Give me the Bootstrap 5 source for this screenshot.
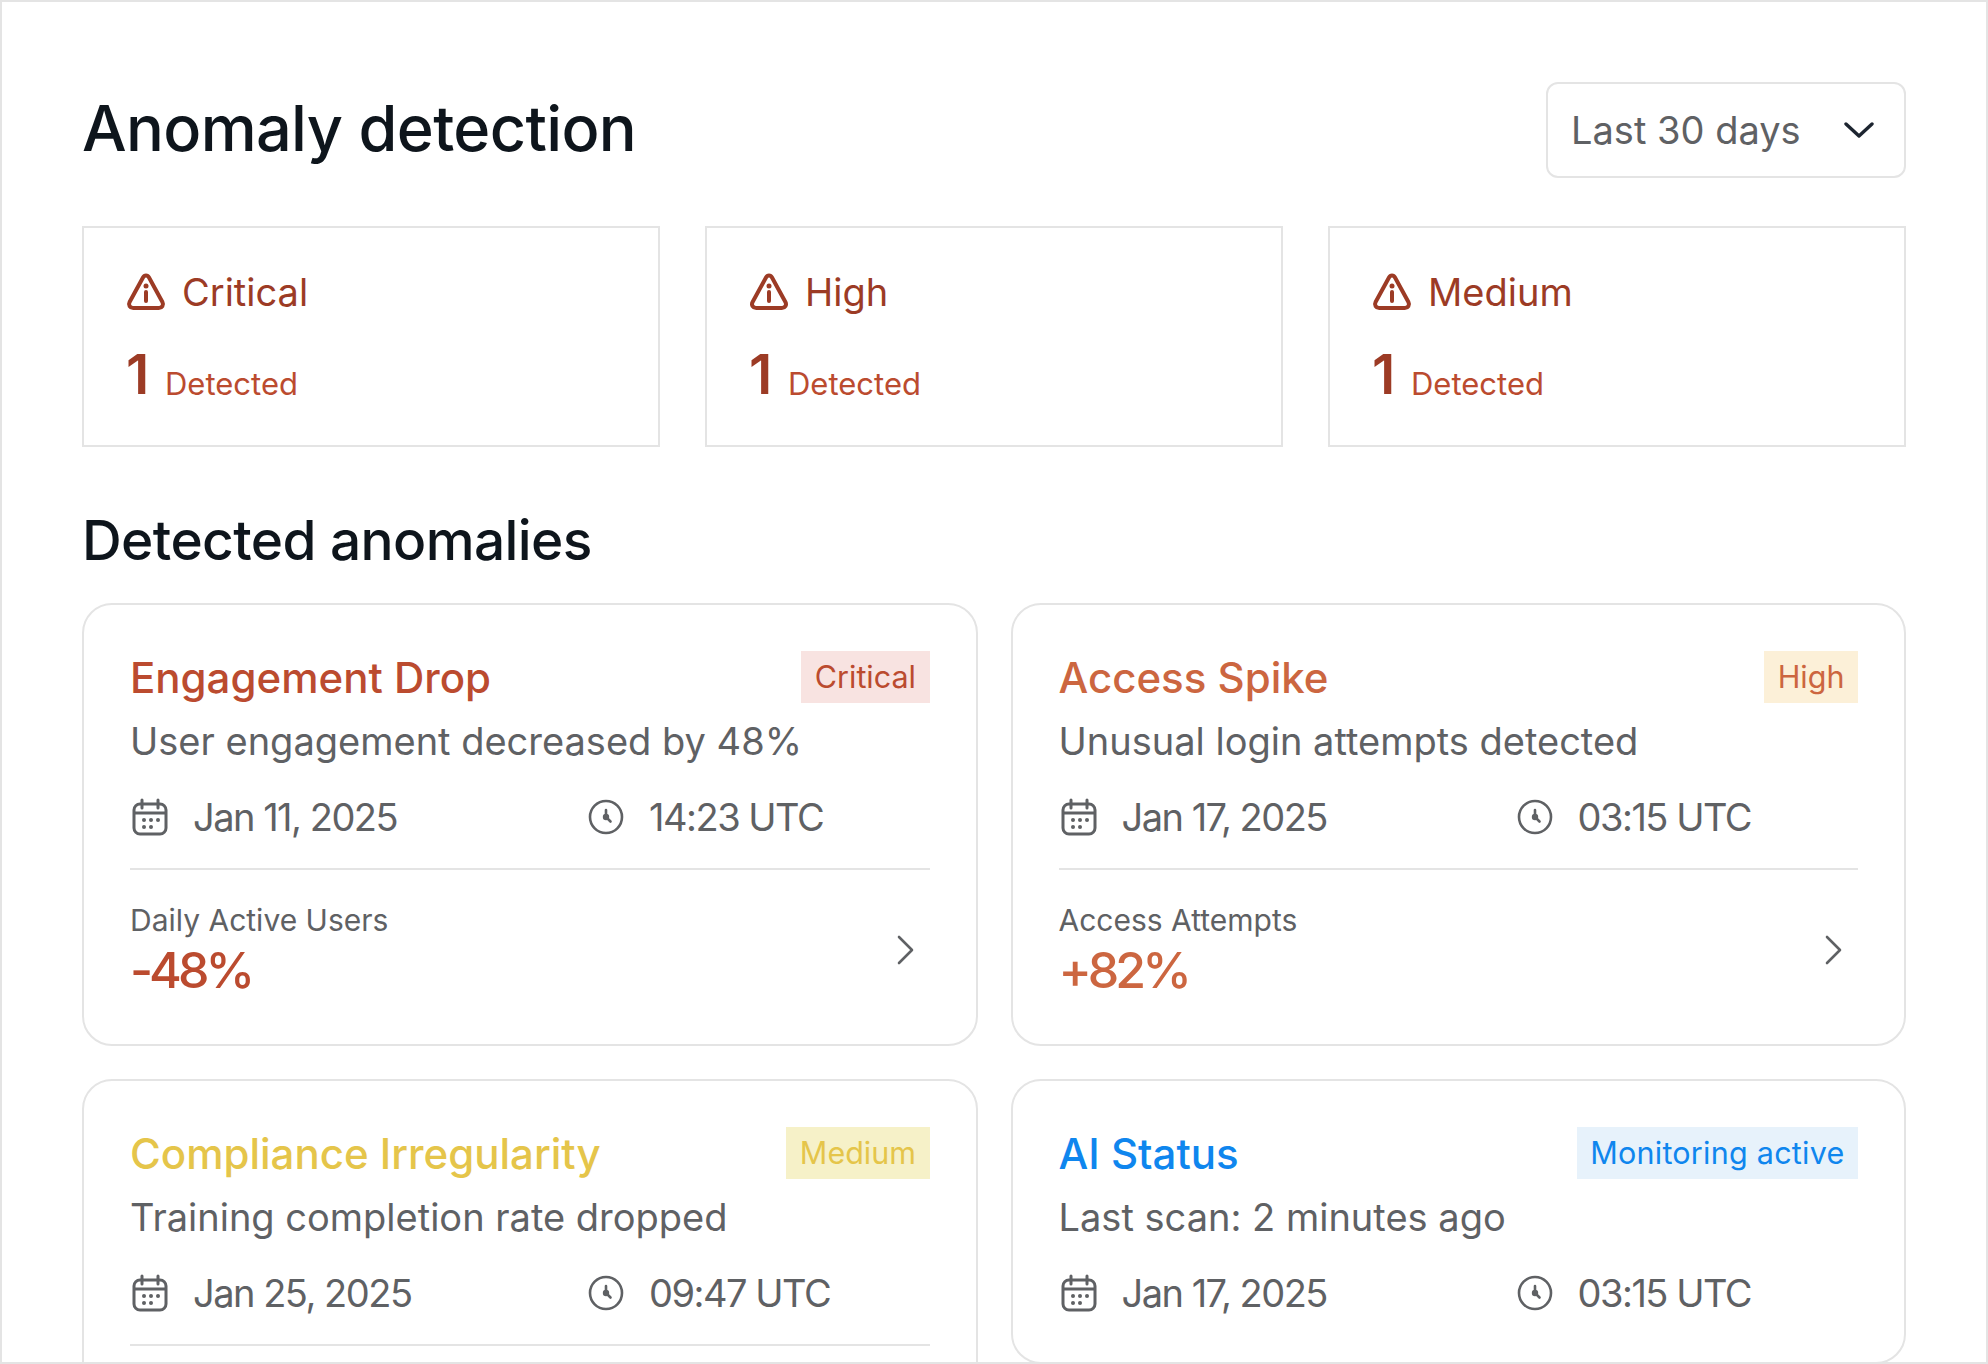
<!doctype html>
<html lang="en">
<head>
<meta charset="utf-8">
<title>Anomaly detection</title>
<link href="https://cdn.jsdelivr.net/npm/bootstrap@5.3.0/dist/css/bootstrap.min.css" rel="stylesheet">
<style>
html,body{height:100%;overflow:hidden;background:#fff}
body{font-family:Inter,"Liberation Sans",sans-serif;color:#5f6164}
.frame{height:1364px;overflow:hidden;border:2px solid #e4e4e4;padding:80px 80px 0 80px}
.page-title{font-size:63px;font-weight:500;line-height:72px;color:#0e151c;margin:0 0 4px;letter-spacing:-.65px}
.range-select{width:360px;height:96px;border:2px solid #e4e4e4;border-radius:12px;padding:0 30px 0 23px;font-size:38px;color:#5f6164}
.summary-row{--bs-gutter-x:45px;margin-top:48px}
.sum-card{height:221px;border:2px solid #e4e4e4;padding:40px 42px}
.sum-head{font-size:38px;line-height:48px;color:#9c3b25;gap:16px}
.sum-stat{margin-top:29px}
.sum-count{font-size:55px;font-weight:600;line-height:58px;color:#9c3b25;width:39px;letter-spacing:-3px}
.sum-text{font-size:31px;line-height:45px;margin-bottom:-3px;color:#bb4b2f}
.section-title{font-size:55px;font-weight:500;line-height:62px;color:#0e151c;margin:62px 0 32px;letter-spacing:-.6px}
.anom-row{--bs-gutter-x:33px;--bs-gutter-y:33px}
.anom-card{border:2px solid #e4e4e4;border-radius:30px;padding:46px 46px 45px;background:#fff}
.anom-title{font-size:42px;font-weight:500;line-height:52px;margin:1px 0 0}
.tag{font-size:30.500px;line-height:52px;padding:0 13.500px;white-space:nowrap}
.anom-desc{font-size:38px;line-height:48px;margin-top:13px}
.meta{font-size:38px;line-height:48px;margin-top:28px;letter-spacing:-1.5px}
.meta-cell{gap:25px}
.meta-cell .ic{margin-left:2px}
.meta-date{flex:0 0 456px}
.rule{height:2px;background:#e4e4e4;margin-top:27px}
.metric-wrap{padding-top:30px}
.metric-blank{height:110px}
.metric-label{font-size:30px;line-height:41px}
.metric-value{font-size:50px;font-weight:500;line-height:58px;letter-spacing:-4px}
.ic{flex:none;color:#5f6164}
.chev-end{margin-right:14px}
.t-critical{color:#bb4b2f}.b-critical{background:#f8e3e1;color:#bb4b2f}
.t-high{color:#cc6640}.b-high{background:#fcf0d8;color:#cc6640}
.t-medium{color:#e5c54a}.b-medium{background:#f6f1c8;color:#e5c54a}
.t-info{color:#0f86ee}.b-info{background:#e7f2fb;color:#0f86ee;letter-spacing:.25px}
</style>
</head>
<body>
<svg width="0" height="0" class="position-absolute">
<defs>
<symbol id="warn" viewBox="0 0 40 40"><path d="M17 5.500 3.600 30c-1.600 3 .4 6 3.600 6h25.600c3.200 0 5.200-3 3.600-6L23 5.500c-1.400-2.600-4.600-2.600-6 0Z" fill="none" stroke="currentColor" stroke-width="4" stroke-linejoin="round"/><path d="M20 20v9" stroke="currentColor" stroke-width="4" stroke-linecap="round"/><circle cx="20" cy="14" r="2.500" fill="currentColor"/></symbol>
<symbol id="cal" viewBox="0 0 36 38"><path d="M10 2v8M26 2v8" stroke="currentColor" stroke-width="3" stroke-linecap="round"/><rect x="2" y="6" width="32" height="30" rx="6" fill="none" stroke="currentColor" stroke-width="3"/><path d="M2 15h32" stroke="currentColor" stroke-width="3"/><g fill="currentColor"><circle cx="12" cy="22" r="2"/><circle cx="19" cy="22" r="2"/><circle cx="26" cy="22" r="2"/><circle cx="12" cy="29" r="2"/><circle cx="19" cy="29" r="2"/></g></symbol>
<symbol id="clk" viewBox="0 0 36 36"><circle cx="18" cy="18" r="16" fill="none" stroke="currentColor" stroke-width="2.600"/><path d="M18 11v7l4.500 4.500" fill="none" stroke="currentColor" stroke-width="2.600" stroke-linecap="round"/><circle cx="18" cy="18" r="3.200" fill="currentColor"/></symbol>
<symbol id="chev" viewBox="0 0 20 32"><path d="M3 3l13 13L3 29" fill="none" stroke="currentColor" stroke-width="2.600" stroke-linecap="round" stroke-linejoin="round"/></symbol>
</defs>
</svg>
<div class="frame">
  <header class="d-flex justify-content-between align-items-center">
    <h1 class="page-title">Anomaly detection</h1>
    <div class="range-select d-flex align-items-center justify-content-between">
      <span>Last 30 days</span>
      <svg width="30" height="18" viewBox="0 0 30 18"><path d="M2 3l13 12L28 3" fill="none" stroke="#1d2530" stroke-width="3.400" stroke-linecap="round" stroke-linejoin="round"/></svg>
    </div>
  </header>
  <div class="row summary-row">
    <div class="col-4"><div class="sum-card">
      <div class="sum-head d-flex align-items-center"><svg width="40" height="40"><use href="#warn"/></svg><span>Critical</span></div>
      <div class="sum-stat d-flex align-items-end"><span class="sum-count">1</span><span class="sum-text">Detected</span></div>
    </div></div>
    <div class="col-4"><div class="sum-card">
      <div class="sum-head d-flex align-items-center"><svg width="40" height="40"><use href="#warn"/></svg><span>High</span></div>
      <div class="sum-stat d-flex align-items-end"><span class="sum-count">1</span><span class="sum-text">Detected</span></div>
    </div></div>
    <div class="col-4"><div class="sum-card">
      <div class="sum-head d-flex align-items-center"><svg width="40" height="40"><use href="#warn"/></svg><span>Medium</span></div>
      <div class="sum-stat d-flex align-items-end"><span class="sum-count">1</span><span class="sum-text">Detected</span></div>
    </div></div>
  </div>
  <h2 class="section-title">Detected anomalies</h2>
  <div class="row anom-row align-items-start">
    <div class="col-6"><article class="anom-card">
      <div class="d-flex justify-content-between align-items-start"><h3 class="anom-title t-critical">Engagement Drop</h3><span class="tag b-critical">Critical</span></div>
      <div class="anom-desc">User engagement decreased by 48%</div>
      <div class="meta d-flex"><div class="meta-cell meta-date d-flex align-items-center"><svg class="ic" width="36" height="38"><use href="#cal"/></svg><span>Jan 11, 2025</span></div><div class="meta-cell d-flex align-items-center"><svg class="ic" width="36" height="36"><use href="#clk"/></svg><span>14:23 UTC</span></div></div>
      <div class="rule"></div>
      <div class="metric-wrap d-flex justify-content-between align-items-center"><div><div class="metric-label">Daily Active Users</div><div class="metric-value t-critical">-48%</div></div><svg class="ic chev-end" width="20" height="32"><use href="#chev"/></svg></div>
    </article></div>
    <div class="col-6"><article class="anom-card">
      <div class="d-flex justify-content-between align-items-start"><h3 class="anom-title t-high">Access Spike</h3><span class="tag b-high">High</span></div>
      <div class="anom-desc">Unusual login attempts detected</div>
      <div class="meta d-flex"><div class="meta-cell meta-date d-flex align-items-center"><svg class="ic" width="36" height="38"><use href="#cal"/></svg><span>Jan 17, 2025</span></div><div class="meta-cell d-flex align-items-center"><svg class="ic" width="36" height="36"><use href="#clk"/></svg><span>03:15 UTC</span></div></div>
      <div class="rule"></div>
      <div class="metric-wrap d-flex justify-content-between align-items-center"><div><div class="metric-label">Access Attempts</div><div class="metric-value t-high">+82%</div></div><svg class="ic chev-end" width="20" height="32"><use href="#chev"/></svg></div>
    </article></div>
    <div class="col-6"><article class="anom-card">
      <div class="d-flex justify-content-between align-items-start"><h3 class="anom-title t-medium">Compliance Irregularity</h3><span class="tag b-medium">Medium</span></div>
      <div class="anom-desc">Training completion rate dropped</div>
      <div class="meta d-flex"><div class="meta-cell meta-date d-flex align-items-center"><svg class="ic" width="36" height="38"><use href="#cal"/></svg><span>Jan 25, 2025</span></div><div class="meta-cell d-flex align-items-center"><svg class="ic" width="36" height="36"><use href="#clk"/></svg><span>09:47 UTC</span></div></div>
      <div class="rule"></div>
      <div class="metric-wrap metric-blank"></div>
    </article></div>
    <div class="col-6"><article class="anom-card">
      <div class="d-flex justify-content-between align-items-start"><h3 class="anom-title t-info">AI Status</h3><span class="tag b-info">Monitoring active</span></div>
      <div class="anom-desc">Last scan: 2 minutes ago</div>
      <div class="meta d-flex"><div class="meta-cell meta-date d-flex align-items-center"><svg class="ic" width="36" height="38"><use href="#cal"/></svg><span>Jan 17, 2025</span></div><div class="meta-cell d-flex align-items-center"><svg class="ic" width="36" height="36"><use href="#clk"/></svg><span>03:15 UTC</span></div></div>
    </article></div>
  </div>
</div>
<script src="https://cdn.jsdelivr.net/npm/bootstrap@5.3.0/dist/js/bootstrap.bundle.min.js"></script>
</body>
</html>
